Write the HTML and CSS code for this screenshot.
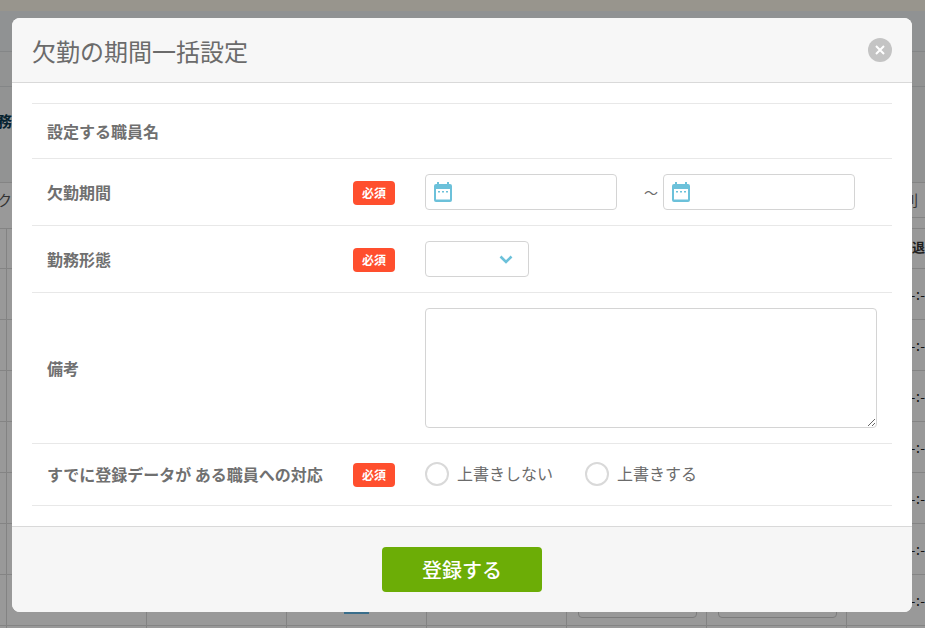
FILE: index.html
```html
<!DOCTYPE html>
<html lang="ja">
<head>
<meta charset="utf-8">
<title>欠勤の期間一括設定</title>
<link rel="stylesheet" href="styles.css">
</head>
<body>
<div class="page">
  <div class="page-top"></div>
  <div class="page-nav"></div>
  <div class="page-sub"><span class="page-head">務</span></div>
  <div class="page-tabs"><span class="tab-l">ク</span><span class="tab-r">列</span></div>
  <div class="page-table">
    <div class="tr th"><span class="late">持退</span></div>
    <div class="tr"><span class="time">-:--</span></div>
    <div class="tr"><span class="time">-:--</span></div>
    <div class="tr"><span class="time">-:--</span></div>
    <div class="tr"><span class="time">-:--</span></div>
    <div class="tr"><span class="time">-:--</span></div>
    <div class="tr"><span class="time">-:--</span></div>
    <div class="tr">
      <span class="time">-:--</span>
      <i class="link"></i><i class="btn b1"></i><i class="btn b2"></i>
    </div>
  </div>
</div>
<div class="overlay"></div>
<div class="modal">
  <header class="modal-head">
    <h1>欠勤の期間一括設定</h1>
    <button class="close" type="button" aria-label="閉じる">
      <svg width="10" height="10" viewBox="0 0 10 10"><path d="M1 1l8 8M9 1l-8 8" stroke="#fff" stroke-width="2"/></svg>
    </button>
  </header>
  <div class="modal-body">
    <div class="row r-name"><div class="label">設定する職員名</div></div>
    <div class="row r-field">
      <div class="label">欠勤期間</div><div class="req"><span class="badge">必須</span></div>
      <div class="ctrl">
        <div class="date">
          <svg width="18" height="20" viewBox="0 0 18 20"><path fill="#6cc1da" d="M3 0h2v2h8V0h2v2h1A2 2 0 0 1 18 4V18A2 2 0 0 1 16 20H2A2 2 0 0 1 0 18V4A2 2 0 0 1 2 2h1z"/><rect x="2" y="7" width="14" height="10.500" fill="#fff"/><path fill="#6cc1da" d="M4 9h2v1.500H4zM8 9h2v1.500H8zM12 9h2v1.500h-2z"/></svg>
        </div>
        <span class="tilde">～</span>
        <div class="date">
          <svg width="18" height="20" viewBox="0 0 18 20"><path fill="#6cc1da" d="M3 0h2v2h8V0h2v2h1A2 2 0 0 1 18 4V18A2 2 0 0 1 16 20H2A2 2 0 0 1 0 18V4A2 2 0 0 1 2 2h1z"/><rect x="2" y="7" width="14" height="10.500" fill="#fff"/><path fill="#6cc1da" d="M4 9h2v1.500H4zM8 9h2v1.500H8zM12 9h2v1.500h-2z"/></svg>
        </div>
      </div>
    </div>
    <div class="row r-field">
      <div class="label">勤務形態</div><div class="req"><span class="badge">必須</span></div>
      <div class="ctrl">
        <div class="select">
          <svg width="14" height="9" viewBox="0 0 14 9"><path d="M1.500 1.500l5.500 5.500 5.500-5.500" fill="none" stroke="#6cc1da" stroke-width="2.600"/></svg>
        </div>
      </div>
    </div>
    <div class="row r-note">
      <div class="label">備考</div><div class="req"></div>
      <div class="ctrl"><textarea class="note"></textarea></div>
    </div>
    <div class="row r-radio">
      <div class="label">すでに登録データが ある職員への対応</div><div class="req"><span class="badge">必須</span></div>
      <div class="ctrl radios">
        <label class="radio"><i></i><span class="radio-text">上書きしない</span></label>
        <label class="radio"><i></i><span class="radio-text">上書きする</span></label>
      </div>
    </div>
  </div>
  <footer class="modal-foot"><button class="submit" type="button">登録する</button></footer>
</div>
</body>
</html>
```
FILE: styles.css
```css
* { box-sizing: border-box; }
html, body { margin: 0; height: 100%; }
body {
  width: 925px; height: 628px; overflow: hidden; position: relative;
  font-family: "Noto Sans CJK JP", "Noto Sans", sans-serif;
  color: #6b6b6b; background: #fff;
}
.page { position: absolute; inset: 0; background: #fff; display: flex; flex-direction: column; }
.page-top { height: 11px; background: #fdf8ec; flex: none; }
.page-nav { height: 41px; background: #f1f4f5; border-bottom: 1px solid #dde0e2; flex: none; }
.page-sub { height: 130px; background: #f3f5f6; flex: none; padding-top: 58px; position: relative; }
.page-sub::before { content: ""; position: absolute; left: 0; right: 0; top: 34px; border-top: 1px solid #dde0e2; }
.page-head { display: block; margin-left: -3px; font-size: 15px; font-weight: 700; color: #0b3a50; line-height: 22px; }
.page-tabs { height: 46px; flex: none; border-top: 1px solid #ddd; display: flex; justify-content: space-between; align-items: flex-start; font-size: 15px; line-height: 34px; color: #555; position: relative; }
.page-tabs::after { content: ""; position: absolute; right: 0; width: 19px; top: 34px; border-top: 1px solid #ddd; }
.tab-l { margin-left: -3px; }
.tab-r { margin-right: 7px; }
.page-table {
  flex: 1; border-top: 1px solid #ddd;
  background: repeating-linear-gradient(90deg, transparent 0 6px, #dadada 6px 7px, transparent 7px 140px);
}
.tr { height: 51px; border-bottom: 1px solid #ddd; display: flex; justify-content: flex-end; align-items: center; font-size: 14px; color: #222; position: relative; }
.tr.th { height: 40px; font-weight: 700; font-size: 13px; }
.late { margin-right: 0; padding-bottom: 4px; white-space: nowrap; color: #333; }
.time { margin-right: -6px; letter-spacing: .5px; }
.link { position: absolute; left: 344px; top: 37px; width: 25px; height: 2px; background: #62b8e8; }
.btn { position: absolute; top: 0; height: 43px; width: 119px; border: 1px solid #cfcfcf; border-radius: 4px; }
.b1 { left: 578px; } .b2 { left: 718px; }
.overlay { position: absolute; inset: 0; background: rgba(0,0,0,.4); }
.modal {
  position: absolute; left: 12px; top: 18px; width: 900px; height: 594px;
  background: #fff; border-radius: 8px; overflow: hidden;
  display: flex; flex-direction: column;
}
.modal-head {
  height: 65px; flex: none; background: #f7f7f7; border-bottom: 1px solid #d9d9d9;
  display: flex; align-items: center; justify-content: space-between; padding: 0 20px;
}
h1 { margin: 0; font-size: 24px; line-height: 65px; font-weight: 400; color: #6b6b6b; }
.close { width: 24px; height: 24px; border: 0; border-radius: 50%; background: #c4c4c4; display: flex; align-items: center; justify-content: center; padding: 0; }
.close svg { display: block; }
.modal-body { flex: 1; padding: 20px 20px 0; }
.row { display: flex; align-items: center; border-top: 1px solid #e8e8e8; }
.r-name { height: 55px; }
.r-field { height: 67px; }
.r-note { height: 151px; }
.r-radio { height: 63px; padding-bottom: 2px; border-bottom: 1px solid #e8e8e8; }
.label { width: 321px; padding-left: 15px; font-size: 16px; font-weight: 700; color: #707070; flex: none; line-height: 22px; white-space: nowrap; }
.req { width: 72px; flex: none; }
.badge { display: block; width: 42px; height: 24px; margin-top: 2px; border-radius: 4px; background: #ff4f2e; color: #fff; font-size: 12px; font-weight: 700; line-height: 24px; text-align: center; }
.ctrl { display: flex; align-items: center; }
.date { width: 192px; height: 36px; border: 1px solid #d4d4d4; border-radius: 4px; background: #fff; display: flex; align-items: center; padding-left: 8px; }
.tilde { width: 46px; text-align: right; font-size: 14px; color: #6b6b6b; padding-right: 5px; }
.select { width: 104px; height: 36px; border: 1px solid #d4d4d4; border-radius: 4px; display: flex; align-items: center; justify-content: flex-end; padding-right: 15px; }
.note { display: block; width: 452px; height: 120px; border: 1px solid #d4d4d4; border-radius: 4px; background: #fff; margin: 0; }
.radios { gap: 32px; }
.radio { display: flex; align-items: center; font-size: 16px; color: #6b6b6b; gap: 8px; line-height: 24px; }
.radio i { width: 24px; height: 24px; border: 2px solid #d9d9d9; border-radius: 50%; display: block; }
.radio-text { padding-bottom: 2px; }
.modal-foot { height: 86px; flex: none; background: #f6f6f6; border-top: 1px solid #d9d9d9; display: flex; justify-content: center; align-items: center; }
.submit { width: 160px; height: 45px; border: 0; border-radius: 4px; background: #6cad06; color: #fff; font: 500 20px "Noto Sans CJK JP", sans-serif; padding: 0; }
```
